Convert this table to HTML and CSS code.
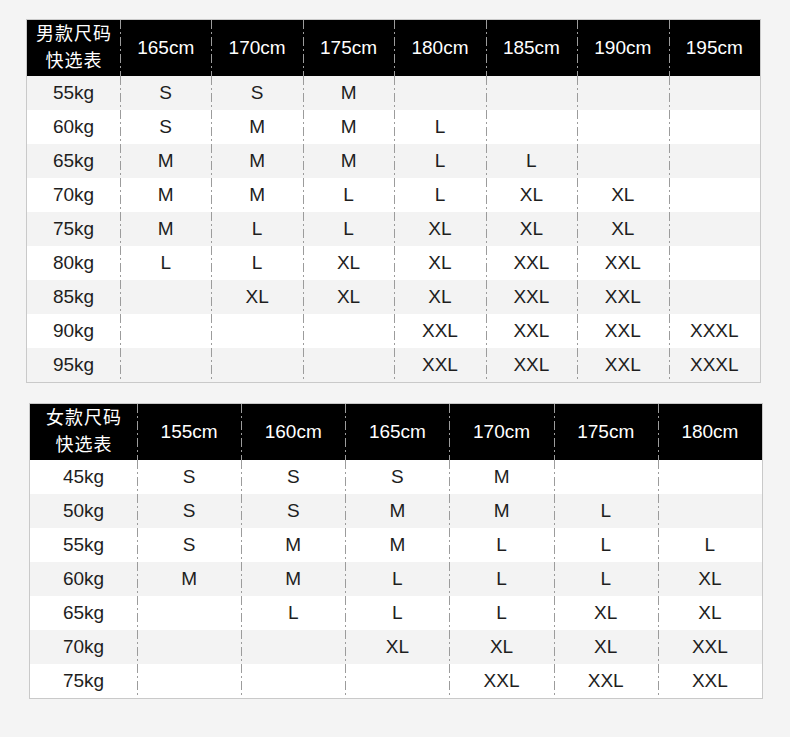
FILE: index.html
```html
<!DOCTYPE html>
<html lang="zh">
<head>
<meta charset="utf-8">
<title>尺码快选表</title>
<link rel="stylesheet" href="styles.css">
</head>
<body>
<div class="page">
  <table class="size-table men">
    <colgroup><col class="first"><col><col><col><col><col><col><col></colgroup>
    <thead>
      <tr><th class="cn">男款尺码<br>快选表</th><th>165cm</th><th>170cm</th><th>175cm</th><th>180cm</th><th>185cm</th><th>190cm</th><th>195cm</th></tr>
    </thead>
    <tbody>
      <tr><td>55kg</td><td>S</td><td>S</td><td>M</td><td></td><td></td><td></td><td></td></tr>
      <tr><td>60kg</td><td>S</td><td>M</td><td>M</td><td>L</td><td></td><td></td><td></td></tr>
      <tr><td>65kg</td><td>M</td><td>M</td><td>M</td><td>L</td><td>L</td><td></td><td></td></tr>
      <tr><td>70kg</td><td>M</td><td>M</td><td>L</td><td>L</td><td>XL</td><td>XL</td><td></td></tr>
      <tr><td>75kg</td><td>M</td><td>L</td><td>L</td><td>XL</td><td>XL</td><td>XL</td><td></td></tr>
      <tr><td>80kg</td><td>L</td><td>L</td><td>XL</td><td>XL</td><td>XXL</td><td>XXL</td><td></td></tr>
      <tr><td>85kg</td><td></td><td>XL</td><td>XL</td><td>XL</td><td>XXL</td><td>XXL</td><td></td></tr>
      <tr><td>90kg</td><td></td><td></td><td></td><td>XXL</td><td>XXL</td><td>XXL</td><td>XXXL</td></tr>
      <tr><td>95kg</td><td></td><td></td><td></td><td>XXL</td><td>XXL</td><td>XXL</td><td>XXXL</td></tr>
    </tbody>
  </table>

  <table class="size-table women">
    <colgroup><col class="first"><col><col><col><col><col><col></colgroup>
    <thead>
      <tr><th class="cn">女款尺码<br>快选表</th><th>155cm</th><th>160cm</th><th>165cm</th><th>170cm</th><th>175cm</th><th>180cm</th></tr>
    </thead>
    <tbody>
      <tr><td>45kg</td><td>S</td><td>S</td><td>S</td><td>M</td><td></td><td></td></tr>
      <tr><td>50kg</td><td>S</td><td>S</td><td>M</td><td>M</td><td>L</td><td></td></tr>
      <tr><td>55kg</td><td>S</td><td>M</td><td>M</td><td>L</td><td>L</td><td>L</td></tr>
      <tr><td>60kg</td><td>M</td><td>M</td><td>L</td><td>L</td><td>L</td><td>XL</td></tr>
      <tr><td>65kg</td><td></td><td>L</td><td>L</td><td>L</td><td>XL</td><td>XL</td></tr>
      <tr><td>70kg</td><td></td><td></td><td>XL</td><td>XL</td><td>XL</td><td>XXL</td></tr>
      <tr><td>75kg</td><td></td><td></td><td></td><td>XXL</td><td>XXL</td><td>XXL</td></tr>
    </tbody>
  </table>
</div>
</body>
</html>
```

FILE: styles.css
```css
html, body {
  margin: 0;
  padding: 0;
  background: #f4f4f4;
}

.page {
  padding-top: 19px;
  font-family: "Liberation Sans", "Noto Sans CJK SC", Arial, sans-serif;
  color: #1e1e1e;
}

.size-table {
  border-collapse: separate;
  border-spacing: 0;
  table-layout: fixed;
  border: 1px solid #c9c9c9;
}

.size-table.men {
  margin-left: 26px;
  width: 735px;
}

.size-table.women {
  margin-top: 20px;
  margin-left: 29px;
  width: 734px;
}

.men col.first { width: 93px; }
.women col.first { width: 107px; }

.size-table th,
.size-table td {
  padding: 0;
  text-align: center;
  vertical-align: middle;
  font-size: 19px;
  font-weight: normal;
}

.size-table th {
  height: 56px;
  background-color: #000;
  color: #fff;
}

.size-table th.cn {
  font-size: 18px;
  letter-spacing: 1px;
  line-height: 27px;
  padding-left: 1px;
}

.size-table td {
  height: 34px;
  line-height: 34px;
}

.size-table th + th,
.size-table td + td {
  background-image: repeating-linear-gradient(to bottom,
    #9c9c9c 0 9px, transparent 9px 12px,
    #9c9c9c 12px 14px, transparent 14px 17px);
  background-size: 1px 100%;
  background-repeat: no-repeat;
  background-position: left top;
}

.men tbody tr:nth-child(odd) { background: #f3f3f3; }
.men tbody tr:nth-child(even) { background: #fff; }
.women tbody tr:nth-child(odd) { background: #fff; }
.women tbody tr:nth-child(even) { background: #f3f3f3; }
```
